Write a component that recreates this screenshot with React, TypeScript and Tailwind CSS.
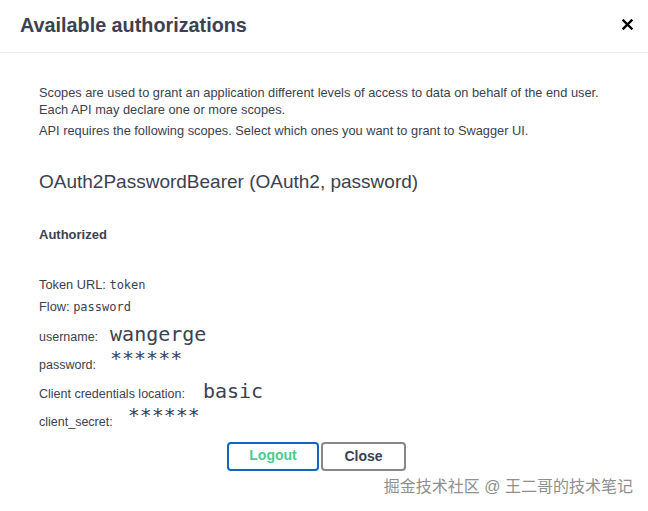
const sans = "font-['Liberation_Sans',Arial,sans-serif]"
const mono = "font-['DejaVu_Sans_Mono','Liberation_Mono',monospace]"

function CloseIcon() {
  return (
    <svg width="11" height="11" viewBox="0 0 11 11" fill="none" stroke="#000" strokeWidth="2.4" strokeLinecap="square">
      <path d="M1.5 1.5l8 8M9.5 1.5l-8 8" />
    </svg>
  )
}

const fields = [
  { label: "username:", value: "wangerge", gap: "gap-[12px]", stars: false },
  { label: "password:", value: "******", gap: "gap-[14px]", stars: true },
  { label: "Client credentials location:", value: "basic", gap: "gap-[18px]", stars: false },
  { label: "client_secret:", value: "******", gap: "gap-[15px]", stars: true },
]

export default function App() {
  return (
    <div className={`w-[648px] h-[511px] bg-white text-[#3b4151] overflow-hidden ${sans}`}>
      {/* Header */}
      <div className="h-[53px] flex items-center justify-between pl-5 pr-[15px] border-b border-[#ebebeb]">
        <h3 className="text-[19.8px] font-bold leading-none text-[#3b4151]">Available authorizations</h3>
        <button className="w-[11px] h-[11px] mb-[4px] flex items-center justify-center">
          <CloseIcon />
        </button>
      </div>

      {/* Body */}
      <div className="pl-[39px] pr-5 pt-[31px]">
        <p className="text-[12.8px] leading-[17px]">
          Scopes are used to grant an application different levels of access to data on behalf of the end user.
          <br />
          Each API may declare one or more scopes.
        </p>
        <p className="text-[12.8px] leading-[17px] mt-[4px]">
          API requires the following scopes. Select which ones you want to grant to Swagger UI.
        </p>

        <h4 className="text-[19px] leading-[22px] mt-[32px]">OAuth2PasswordBearer (OAuth2, password)</h4>

        <h6 className="text-[13px] font-bold leading-[16px] mt-[34px]">Authorized</h6>

        <p className="text-[12.8px] leading-[16px] mt-[34px]">
          Token URL: <code className={`${mono} text-[12px]`}>token</code>
        </p>
        <p className="text-[12.8px] leading-[16px] mt-[6px]">
          Flow: <code className={`${mono} text-[12px]`}>password</code>
        </p>

        <div className="mt-[5px]">
          {fields.map((f) => (
            <div key={f.label} className={`flex items-baseline h-[28.3px] ${f.gap}`}>
              <label className="text-[12.5px] leading-[28px]">{f.label}</label>
              <code
                className={`${mono} text-[20px] leading-[28px] text-[#3b4151] ${f.stars ? "-translate-y-[4px]" : ""}`}
              >
                {f.value}
              </code>
            </div>
          ))}
        </div>

        <div className="mt-[9px] flex pl-[188px] gap-[2px]">
          <button className="w-[92px] h-[29px] border-2 border-[#1565c0] rounded-[4px] text-[14px] font-bold text-[#49cc90] pb-[2px]">
            Logout
          </button>
          <button className="w-[85px] h-[29px] border-2 border-[#888] rounded-[4px] text-[14px] font-bold text-[#3b4151]">
            Close
          </button>
        </div>
      </div>

      <div className="flex justify-end pr-[15px] mt-[6px]">
        <span className="text-[16px] leading-[20px] text-[#8f8f8f] font-['Liberation_Sans','Noto_Sans_CJK_SC',sans-serif]">
          掘金技术社区 @ 王二哥的技术笔记
        </span>
      </div>
    </div>
  )
}
